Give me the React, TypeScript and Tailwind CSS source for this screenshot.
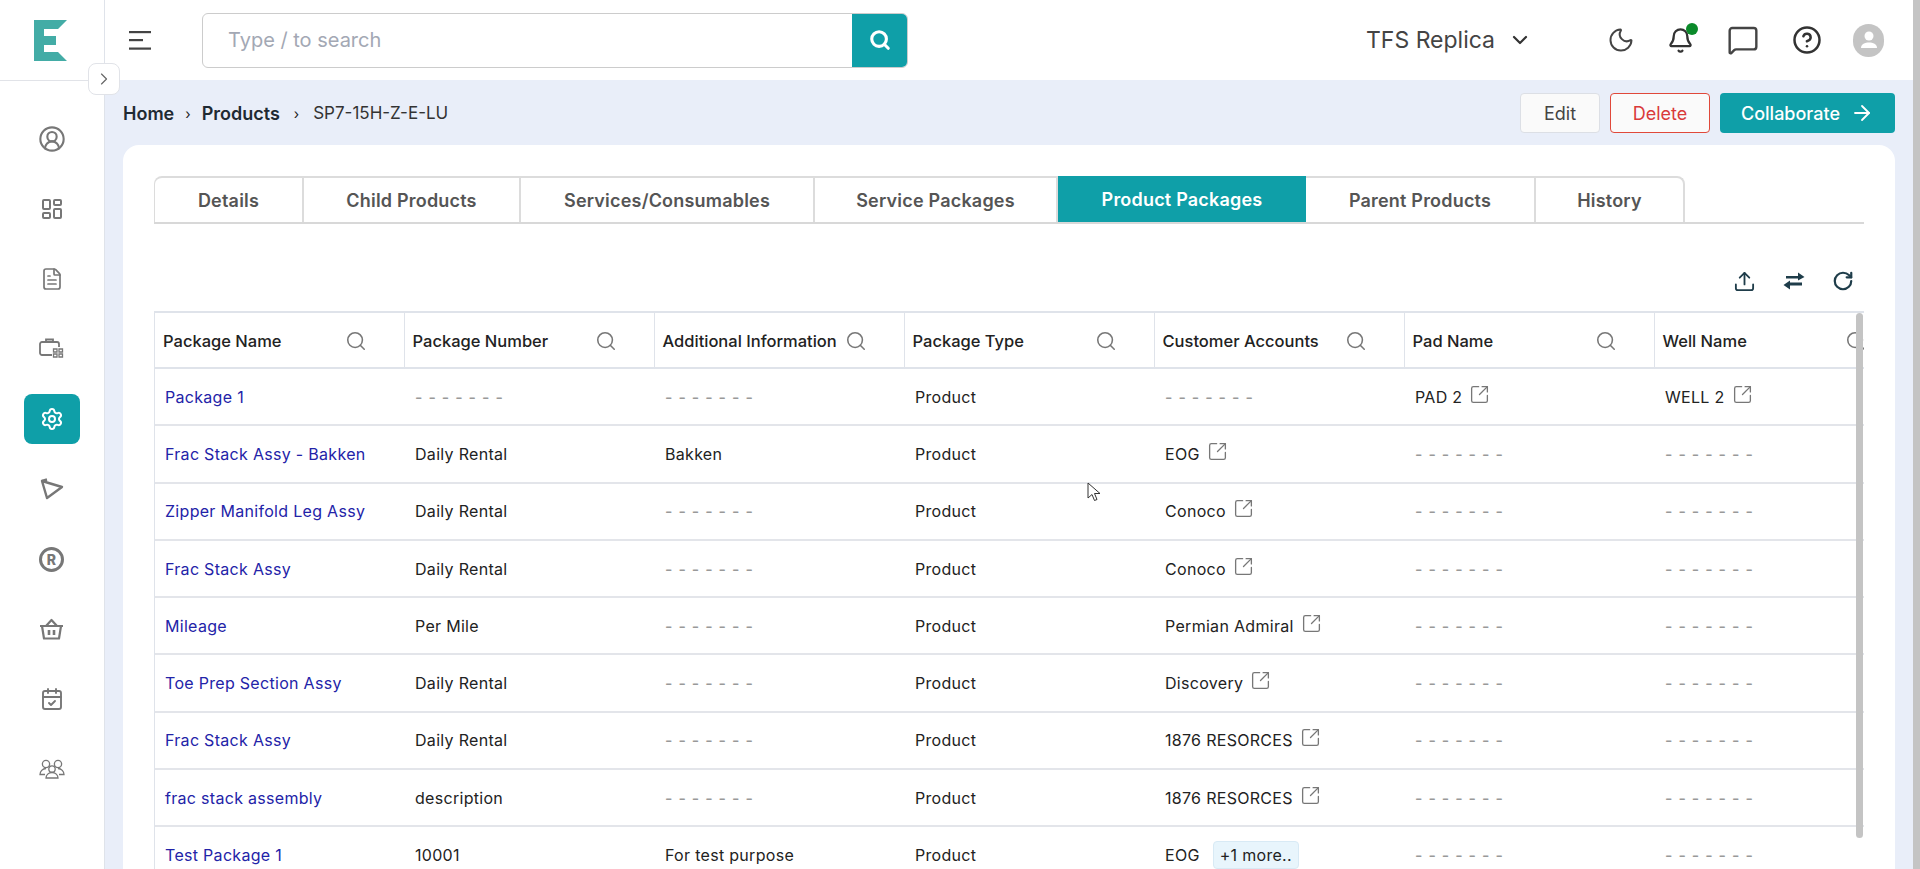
import React from 'react';
import {
  ArrowRight, CalendarCheck, ChevronDown, ChevronRight, CircleHelp, CircleUserRound, FileText, LayoutDashboard,
  MessageSquare, Moon, RotateCw, Search, Settings, SquareArrowOutUpRight, Upload, Bell,
} from 'lucide-react';

const BODY = 'font-["Inter",sans-serif]';
const TABS = [
  { label: 'Details', w: 'w-[150px]' },
  { label: 'Child Products', w: 'w-[217px]' },
  { label: 'Services/Consumables', w: 'w-[294px]' },
  { label: 'Service Packages', w: 'w-[243px]' },
  { label: 'Product Packages', w: 'w-[248px]', active: true },
  { label: 'Parent Products', w: 'w-[230px]' },
  { label: 'History', w: 'w-[149px]' },
];
const COLUMNS = ['Package Name', 'Package Number', 'Additional Information', 'Package Type', 'Customer Accounts', 'Pad Name', 'Well Name'];
const ROWS = [
  { name: 'Package 1', num: '', info: '', acct: '', pad: 'PAD 2', well: 'WELL 2' },
  { name: 'Frac Stack Assy - Bakken', num: 'Daily Rental', info: 'Bakken', acct: 'EOG' },
  { name: 'Zipper Manifold Leg Assy', num: 'Daily Rental', info: '', acct: 'Conoco' },
  { name: 'Frac Stack Assy', num: 'Daily Rental', info: '', acct: 'Conoco' },
  { name: 'Mileage', num: 'Per Mile', info: '', acct: 'Permian Admiral' },
  { name: 'Toe Prep Section Assy', num: 'Daily Rental', info: '', acct: 'Discovery' },
  { name: 'Frac Stack Assy', num: 'Daily Rental', info: '', acct: '1876 RESORCES' },
  { name: 'frac stack assembly', num: 'description', info: '', acct: '1876 RESORCES' },
  { name: 'Test Package 1', num: '10001', info: 'For test purpose', acct: 'EOG', more: true },
];

const Logo = () => (
  <svg width="34" height="41" viewBox="0 0 34 41">
    <path d="M0 0H33L24 9H10V16H22V25H10V32H24L33 41H0Z" fill="#43aca6" />
  </svg>
);

const Briefcase = () => (
  <svg width="25" height="22" viewBox="0 0 25 22" fill="none" stroke="#777" strokeWidth="1.8">
    <path d="M13 17H3a2 2 0 0 1-2-2V6a2 2 0 0 1 2-2h15a2 2 0 0 1 2 2v3" />
    <path d="M7 4V1.500h7V4" />
    <path d="M14.500 11h3.500v3h-3.500zM20 11h3.500v3H20zM14.500 16h3.500v3h-3.500zM20 16h3.500v3H20z" strokeWidth="1.300" />
  </svg>
);

const PlayMark = () => (
  <svg width="24" height="22" viewBox="0 0 24 22" fill="none" stroke="#777" strokeWidth="2.400" strokeLinejoin="round">
    <path d="M2 3 22 9 7 20Z" />
    <path d="M2 3 7 1.500" />
  </svg>
);

const Registered = () => (
  <div className="flex h-[25px] w-[25px] items-center justify-center rounded-full border-[3px] border-[#777] text-[14px] font-extrabold text-[#777]">R</div>
);

const Basket = () => (
  <svg width="25" height="22" viewBox="0 0 25 22" fill="none" stroke="#777" strokeWidth="2.200" strokeLinejoin="round">
    <path d="M7 8 12.500 2 18 8" />
    <path d="M1 8h23M3 8l2 12.500h15L22 8" />
    <path d="M10 12v5M15 12v5" strokeWidth="2.600" />
  </svg>
);

const People = () => (
  <svg width="26" height="20" viewBox="0 0 26 20" fill="none" stroke="#777" strokeWidth="1.300">
    <circle cx="7" cy="5" r="3.600" />
    <circle cx="19" cy="5" r="3.600" />
    <circle cx="13" cy="10" r="3.200" fill="#fff" />
    <path d="M7 19c0-3 2.500-5.500 6-5.500s6 2.500 6 5.500Z" />
    <path d="M6 15.500H1c0-3 2.500-6 6-6M20 15.500h5c0-3-2.500-6-6-6" />
  </svg>
);

const Hamburger = () => (
  <svg width="22" height="19" viewBox="0 0 22 19" fill="#444">
    <rect x="0" y="0" width="22" height="2.200" />
    <rect x="0" y="8" width="14" height="2.200" />
    <rect x="0" y="16.500" width="22" height="2.200" />
  </svg>
);

const Swap = () => (
  <svg width="22" height="18" viewBox="0 0 22 18" fill="#1f3d4a">
    <path d="M3 4h12V0.500L21.500 5 15 8.500V6.500H3z" />
    <path d="M19 10.500H7V8.500L0.500 13 7 17.500V13.500H19z" />
  </svg>
);

const Cursor = () => (
  <svg width="14" height="20" viewBox="0 0 14 20" className="absolute left-[1087px] top-[482px]">
    <path d="M1 1v15l4-3.500 2.500 6 2.500-1-2.500-6H13Z" fill="#fff" stroke="#333" strokeWidth="1" />
  </svg>
);

const Dashes = () => <span className="text-[16px] font-medium tracking-[6px] text-[#999]">-------</span>;

const Linked = ({ text }: { text: string }) => (
  <span className="inline-flex items-start gap-[7px]">
    <span>{text}</span>
    <SquareArrowOutUpRight size={21} strokeWidth={1.5} className="-mt-[1px] text-[#777]" />
  </span>
);

const NAV = [
  <CircleUserRound size={28} strokeWidth={1.8} color="#777" />,
  <LayoutDashboard size={24} strokeWidth={2} color="#777" />,
  <FileText size={24} strokeWidth={1.7} color="#777" />,
  <Briefcase />,
];
const NAV_AFTER = [
  <PlayMark />,
  <Registered />,
  <Basket />,
  <CalendarCheck size={24} strokeWidth={1.9} color="#777" />,
  <People />,
];

export default function App() {
  return (
    <div className={`relative flex h-[869px] w-[1920px] overflow-hidden bg-[#e9eef9] text-[#222] ${BODY}`}>
      {/* sidebar */}
      <aside className="flex w-[105px] shrink-0 flex-col border-r border-[#dfe3ea] bg-white">
        <div className="flex h-[81px] items-center justify-center border-b border-[#e1e3e8] pr-[2px]">
          <Logo />
        </div>
        <div className="flex flex-col items-center pt-[23px]">
          {NAV.map((icon, i) => (
            <div key={i} className="flex h-[70px] w-full items-center justify-center pr-[1px]">{icon}</div>
          ))}
          <div className="flex h-[70px] w-full items-center justify-center pr-[1px]">
            <div className="flex h-[50px] w-[56px] items-center justify-center rounded-lg bg-[#0f9fa8]">
              <Settings size={24} strokeWidth={2} color="#fff" />
            </div>
          </div>
          {NAV_AFTER.map((icon, i) => (
            <div key={i} className="flex h-[70px] w-full items-center justify-center pr-[1px]">{icon}</div>
          ))}
        </div>
      </aside>

      {/* collapse toggle */}
      <div className="absolute left-[88px] top-[63px] z-10 flex h-8 w-8 items-center justify-center rounded-lg border border-[#e1e3e8] bg-white">
        <ChevronRight size={20} strokeWidth={1.4} color="#666" />
      </div>

      <div className="flex min-w-0 flex-1 flex-col">
        {/* header */}
        <header className="flex h-[80px] shrink-0 items-center bg-white">
          <div className="ml-[24px] flex"><Hamburger /></div>
          <div className="ml-[51px] flex h-[55px] w-[706px] overflow-hidden rounded-md border border-[#ccc]">
            <div className="flex flex-1 items-center pl-[25px] text-[20px] text-[#a3a8b4]">Type / to search</div>
            <div className="flex w-[55px] items-center justify-center bg-[#0f9fa8]">
              <Search size={22} strokeWidth={3.400} color="#fff" />
            </div>
          </div>
          <div className="ml-[458px] w-[128px] whitespace-nowrap text-[23px] text-[#444]">TFS Replica</div>
          <ChevronDown size={24} strokeWidth={2.200} color="#333" className="ml-[14px]" />
          <Moon size={28} strokeWidth={1.700} color="#444" className="ml-[75px]" />
          <div className="relative ml-[32px]">
            <Bell size={27} strokeWidth={2} color="#333" />
            <div className="absolute -right-[4px] -top-[4px] h-3 w-3 rounded-full bg-[#0b8a2a]" />
          </div>
          <MessageSquare size={32} strokeWidth={1.800} color="#444" className="ml-[33px]" />
          <CircleHelp size={30} strokeWidth={2} color="#333" className="ml-[33px]" />
          <div className="ml-[31px] flex h-[33px] w-[31px] items-center justify-center rounded-full bg-[#c4c4c4]">
            <svg width="18" height="20" viewBox="0 0 18 20" fill="#fff">
              <circle cx="9" cy="6" r="4.500" />
              <path d="M1 18c0-4 4-5.500 8-5.500s8 1.500 8 5.500Z" />
            </svg>
          </div>
        </header>

        {/* breadcrumb + actions */}
        <div className="flex h-[65px] shrink-0 items-center pl-[18px] pr-[18px]">
          <div className="flex items-center pt-[2px]">
            <span className="text-[18px] font-semibold text-[#1f2a33]">Home</span>
            <span className="mx-[11px] text-[14px]">›</span>
            <span className="text-[18px] font-semibold text-[#1f2a33]">Products</span>
            <span className="mx-[14px] text-[14px]">›</span>
            <span className="text-[17px] text-[#333]">SP7-15H-Z-E-LU</span>
          </div>
          <div className="ml-auto flex items-center gap-[10px] pt-[1px]">
            <button className="flex h-10 w-[80px] items-center justify-center rounded border border-[#dcdfe5] bg-[#fafafa] text-[18px] text-[#444]">Edit</button>
            <button className="flex h-10 w-[100px] items-center justify-center rounded border border-[#e0483a] bg-[#fafafa] text-[18px] text-[#d93a3a]">Delete</button>
            <button className="flex h-10 w-[175px] items-center justify-center gap-[10px] rounded bg-[#0f9fa8] text-[18px] font-medium text-white">
              Collaborate <ArrowRight size={24} strokeWidth={1.800} />
            </button>
          </div>
        </div>

        {/* card */}
        <main className="ml-[18px] mr-[18px] w-[1772px] flex-1 rounded-t-2xl bg-white pl-[31px] pr-[31px] pt-[31px]">
          <div className="flex border-b-2 border-[#d8d8d8]">
            {TABS.map((t, i) => (
              <div
                key={t.label}
                className={`flex h-[46px] items-center justify-center pt-[1px] text-[18px] font-semibold tracking-[0.200px] ${t.w} ${
                  t.active ? 'bg-[#0f9fa8] text-white' : 'border-r-2 border-t-2 border-[#dcdcdc] text-[#555]'
                } ${i === 0 ? 'rounded-tl-lg border-l' : ''} ${i === TABS.length - 1 ? 'rounded-tr-lg' : ''}`}
              >
                {t.label}
              </div>
            ))}
          </div>

          <div className="flex h-[87px] items-center justify-end gap-[27px] pr-[10px] pt-[27px]">
            <Upload size={23} strokeWidth={1.900} color="#1f3d4a" />
            <Swap />
            <RotateCw size={22} strokeWidth={2.400} color="#1f3d4a" />
          </div>

          <div className="relative h-[600px] w-[1710px] overflow-hidden border-l border-t-2 border-[#dfe3ea]">
            <table className="w-[1749px] table-fixed border-collapse text-[16px]">
              <thead>
                <tr className="h-[55px] border-b-2 border-[#dfe3ea]">
                  {COLUMNS.map((c, i) => (
                    <th key={c} className={`${i === 0 ? 'w-[249px]' : 'w-[250px]'} border-r border-[#dfe3ea] pl-[8px] pt-[2px] text-left text-[16.500px] font-medium`}>
                      <div className="flex items-center">
                        <span className="whitespace-nowrap">{c}</span>
                        <Search size={22} strokeWidth={1.700} color="#777" className="absolute" style={{ marginLeft: 182 }} />
                      </div>
                    </th>
                  ))}
                </tr>
              </thead>
              <tbody className="tracking-[0.300px]">
                {ROWS.map((r, i) => (
                  <tr key={i} className="h-[57.300px] border-b-2 border-[#e3e5ea]">
                    <td className="pl-[10px] text-[#2323a8]">{r.name}</td>
                    <td className="pl-[11px]">{r.num || <Dashes />}</td>
                    <td className="pl-[11px]">{r.info || <Dashes />}</td>
                    <td className="pl-[11px]">Product</td>
                    <td className="pl-[11px]">
                      {!r.acct ? <Dashes /> : r.more ? (
                        <span className="inline-flex items-center gap-[13px]">
                          {r.acct}
                          <span className="rounded border border-[#d8eaf5] bg-[#e8f5fc] px-[6px] py-[1px]">+1 more..</span>
                        </span>
                      ) : <Linked text={r.acct} />}
                    </td>
                    <td className="pl-[11px]">{r.pad ? <Linked text={r.pad} /> : <Dashes />}</td>
                    <td className="pl-[11px]">{r.well ? <Linked text={r.well} /> : <Dashes />}</td>
                  </tr>
                ))}
              </tbody>
            </table>
            {/* table scrollbar */}
            <div className="absolute right-[1px] top-0 h-[525px] w-[7px] rounded bg-[#c4c4c4]" />
          </div>
        </main>
      </div>

      {/* page scrollbar */}
      <div className="w-[7px] shrink-0 bg-[#c4c4c4]" />
      <Cursor />
    </div>
  );
}
